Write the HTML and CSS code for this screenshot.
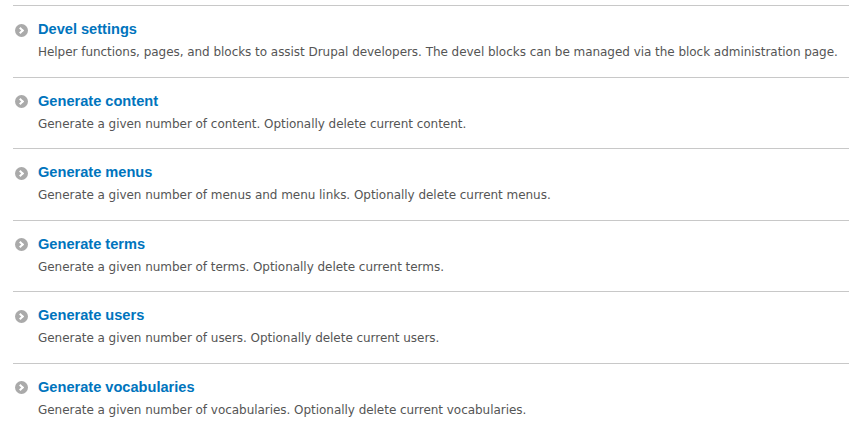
FILE: index.html
```html
<!DOCTYPE html>
<html lang="en">

<head>
    <title>Development</title>
    <meta charset="UTF-8">
    <link rel="stylesheet" href="styles.css">
</head>

<body>
    <dl class="admin-list">
        <div class="admin-item">
            <dt><span class="arrow"></span><a href="#">Devel settings</a></dt>
            <dd>Helper functions, pages, and blocks to assist Drupal developers. The devel blocks can be managed via the block administration page.</dd>
        </div>
        <div class="admin-item">
            <dt><span class="arrow"></span><a href="#">Generate content</a></dt>
            <dd>Generate a given number of content. Optionally delete current content.</dd>
        </div>
        <div class="admin-item">
            <dt><span class="arrow"></span><a href="#">Generate menus</a></dt>
            <dd>Generate a given number of menus and menu links. Optionally delete current menus.</dd>
        </div>
        <div class="admin-item">
            <dt><span class="arrow"></span><a href="#">Generate terms</a></dt>
            <dd>Generate a given number of terms. Optionally delete current terms.</dd>
        </div>
        <div class="admin-item">
            <dt><span class="arrow"></span><a href="#">Generate users</a></dt>
            <dd>Generate a given number of users. Optionally delete current users.</dd>
        </div>
        <div class="admin-item">
            <dt><span class="arrow"></span><a href="#">Generate vocabularies</a></dt>
            <dd>Generate a given number of vocabularies. Optionally delete current vocabularies.</dd>
        </div>
    </dl>
</body>

</html>
```

FILE: styles.css
```css
body {
    margin: 0;
    padding: 5px 1px 0 13px;
    background: #fff;
    color: #333;
    font-family: "DejaVu Sans", Verdana, sans-serif;
    font-size: 12px;
}

.admin-list {
    margin: 0;
}

.admin-item {
    border-top: 1px solid #c8c8c8;
    padding: 13px 0 16.6px;
}

.admin-item dt {
    display: flex;
    align-items: center;
    font-family: "Liberation Sans", Arial, sans-serif;
    font-size: 14.6px;
    font-weight: bold;
    line-height: 20px;
}

.admin-item dt a {
    color: #0074bd;
    text-decoration: none;
}

.arrow {
    position: relative;
    width: 13px;
    height: 13px;
    margin: 2px 10px 0 2px;
    border-radius: 50%;
    background: #aaa;
}

.arrow:after {
    content: "";
    position: absolute;
    left: 3px;
    top: 4px;
    width: 3px;
    height: 3px;
    border-top: 2px solid #fff;
    border-right: 2px solid #fff;
    transform: rotate(45deg);
}

.admin-item dd {
    margin: 5px 0 0 25px;
    line-height: 16px;
    letter-spacing: -0.04px;
    color: #555;
}
```
